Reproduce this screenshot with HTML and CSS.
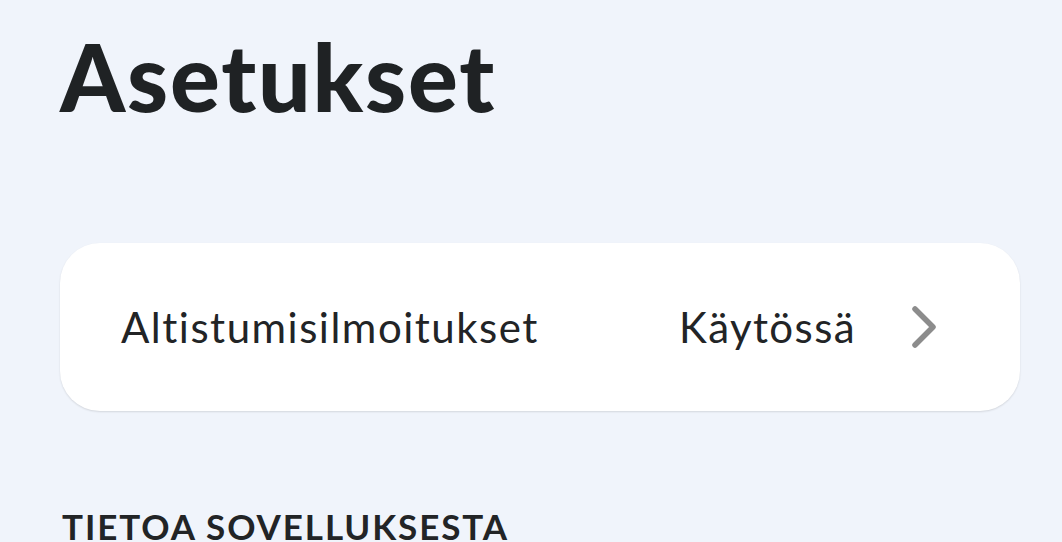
FILE: index.html
```html
<!DOCTYPE html>
<html lang="fi">
<head>
<meta charset="utf-8">
<link rel="stylesheet" href="styles.css">
</head>
<body>
<main class="page">
  <h1 class="title">Asetukset</h1>
  <div class="card">
    <span class="label">Altistumisilmoitukset</span>
    <span class="value">Käytössä</span>
    <svg class="chev" width="28" height="44" viewBox="0 0 28 44"><path d="M5 4 L23 22 L5 40" fill="none" stroke="#8c8c8c" stroke-width="5.5" stroke-linecap="round" stroke-linejoin="round"/></svg>
  </div>
  <h2 class="section">TIETOA SOVELLUKSESTA</h2>
</main>
</body>
</html>
```
FILE: styles.css
```css
html, body {
  margin: 0;
  padding: 0;
  background: #f0f4fb;
  overflow: hidden;
}
.page {
  padding: 0 42px 0 60px;
  font-family: Lato, "Noto Sans", sans-serif;
  color: #222426;
}
.title {
  margin: 0;
  padding-top: 20px;
  font-size: 93px;
  line-height: 112px;
  font-weight: 900;
  letter-spacing: 1.8px;
  color: #1f2224;
}
.card {
  margin-top: 111px;
  height: 168px;
  box-sizing: border-box;
  background: #fff;
  border-radius: 40px;
  box-shadow: 0 1px 2px rgba(0,0,0,0.12);
  display: flex;
  align-items: center;
  padding: 0 82px 0 61px;
}
.label {
  font-size: 42px;
  letter-spacing: 1.5px;
  flex: 1;
}
.value {
  font-size: 42px;
  letter-spacing: 1.4px;
  margin-right: 54px;
}
.chev { display: block; }
.section {
  margin: 94px 0 0 2px;
  font-size: 35px;
  font-weight: 700;
  letter-spacing: 1.9px;
  color: #222426;
}
```
